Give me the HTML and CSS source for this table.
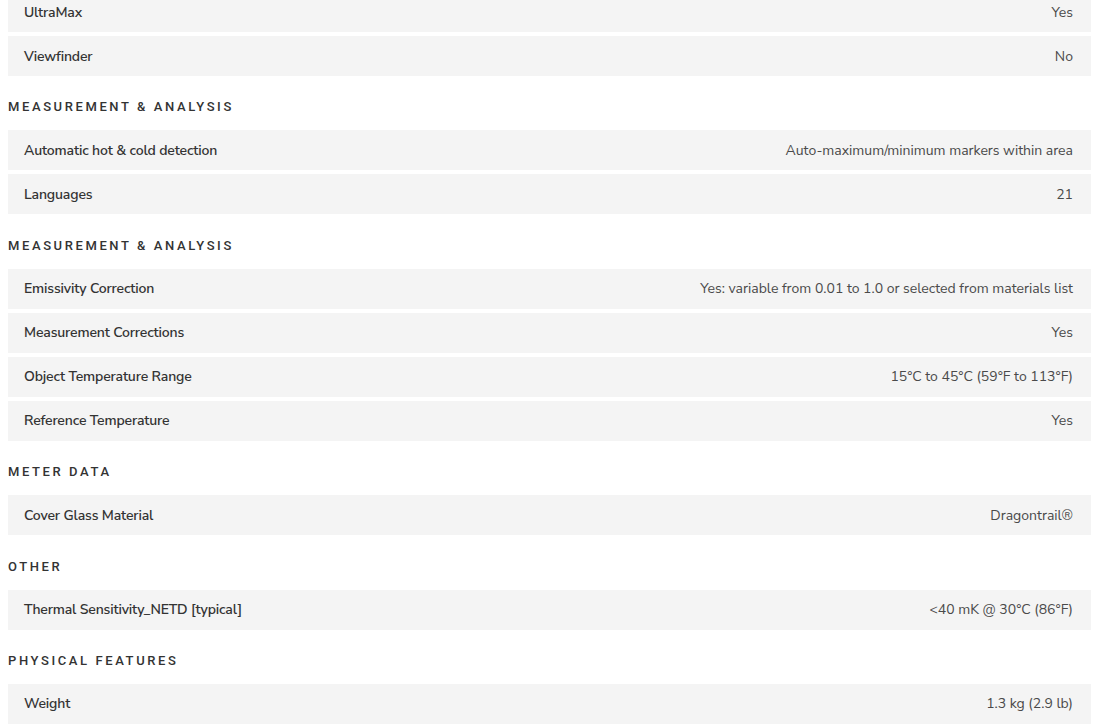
FILE: index.html
```html
<!DOCTYPE html>
<html lang="en">
<head>
<meta charset="utf-8">
<title>Specifications</title>
<link rel="stylesheet" href="styles.css">
</head>
<body>
<div class="specs">
  <section class="group first">
    <div class="rows">
      <div class="row"><span class="label">UltraMax</span><span class="value">Yes</span></div>
      <div class="row"><span class="label">Viewfinder</span><span class="value">No</span></div>
    </div>
  </section>
  <section class="group">
    <h3 class="heading">Measurement &amp; Analysis</h3>
    <div class="rows">
      <div class="row"><span class="label">Automatic hot &amp; cold detection</span><span class="value">Auto-maximum/minimum markers within area</span></div>
      <div class="row"><span class="label">Languages</span><span class="value">21</span></div>
    </div>
  </section>
  <section class="group">
    <h3 class="heading">Measurement &amp; Analysis</h3>
    <div class="rows">
      <div class="row"><span class="label">Emissivity Correction</span><span class="value">Yes: variable from 0.01 to 1.0 or selected from materials list</span></div>
      <div class="row"><span class="label">Measurement Corrections</span><span class="value">Yes</span></div>
      <div class="row"><span class="label">Object Temperature Range</span><span class="value">15°C to 45°C (59°F to 113°F)</span></div>
      <div class="row"><span class="label">Reference Temperature</span><span class="value">Yes</span></div>
    </div>
  </section>
  <section class="group">
    <h3 class="heading">Meter Data</h3>
    <div class="rows">
      <div class="row"><span class="label">Cover Glass Material</span><span class="value">Dragontrail®</span></div>
    </div>
  </section>
  <section class="group">
    <h3 class="heading">Other</h3>
    <div class="rows">
      <div class="row"><span class="label">Thermal Sensitivity_NETD [typical]</span><span class="value">&lt;40 mK @ 30°C (86°F)</span></div>
    </div>
  </section>
  <section class="group">
    <h3 class="heading">Physical Features</h3>
    <div class="rows">
      <div class="row"><span class="label">Weight</span><span class="value">1.3 kg (2.9 lb)</span></div>
    </div>
  </section>
</div>
</body>
</html>
```
FILE: styles.css
```css
html, body {
  background: #ffffff;
}
body {
  margin: 0;
  padding: 0 8px;
  display: flow-root;
  font-family: "Nunito Sans", Lato, "Open Sans", sans-serif;
  font-size: 14px;
  color: #333333;
  overflow: hidden;
}
.specs {
  margin-top: -8px;
  display: flex;
  flex-direction: column;
  gap: 20.4px;
}
.group {
  display: flex;
  flex-direction: column;
}
.heading {
  margin: 0 0 13px 0;
  padding-top: 1px;
  font-family: Roboto, "DejaVu Sans", sans-serif;
  font-weight: 500;
  font-size: 13px;
  line-height: 20px;
  letter-spacing: 2.6px;
  text-transform: uppercase;
  color: #333333;
}
.rows {
  display: flex;
  flex-direction: column;
  gap: 4px;
}
.row {
  height: 40px;
  box-sizing: border-box;
  padding: 0 18px 0 16px;
  background: #f4f4f4;
  display: flex;
  align-items: center;
  justify-content: space-between;
}
.label {
  font-weight: 600;
  color: #333333;
  letter-spacing: -0.15px;
}
.value {
  font-weight: 400;
  color: #4a4a4a;
  text-align: right;
}
```
